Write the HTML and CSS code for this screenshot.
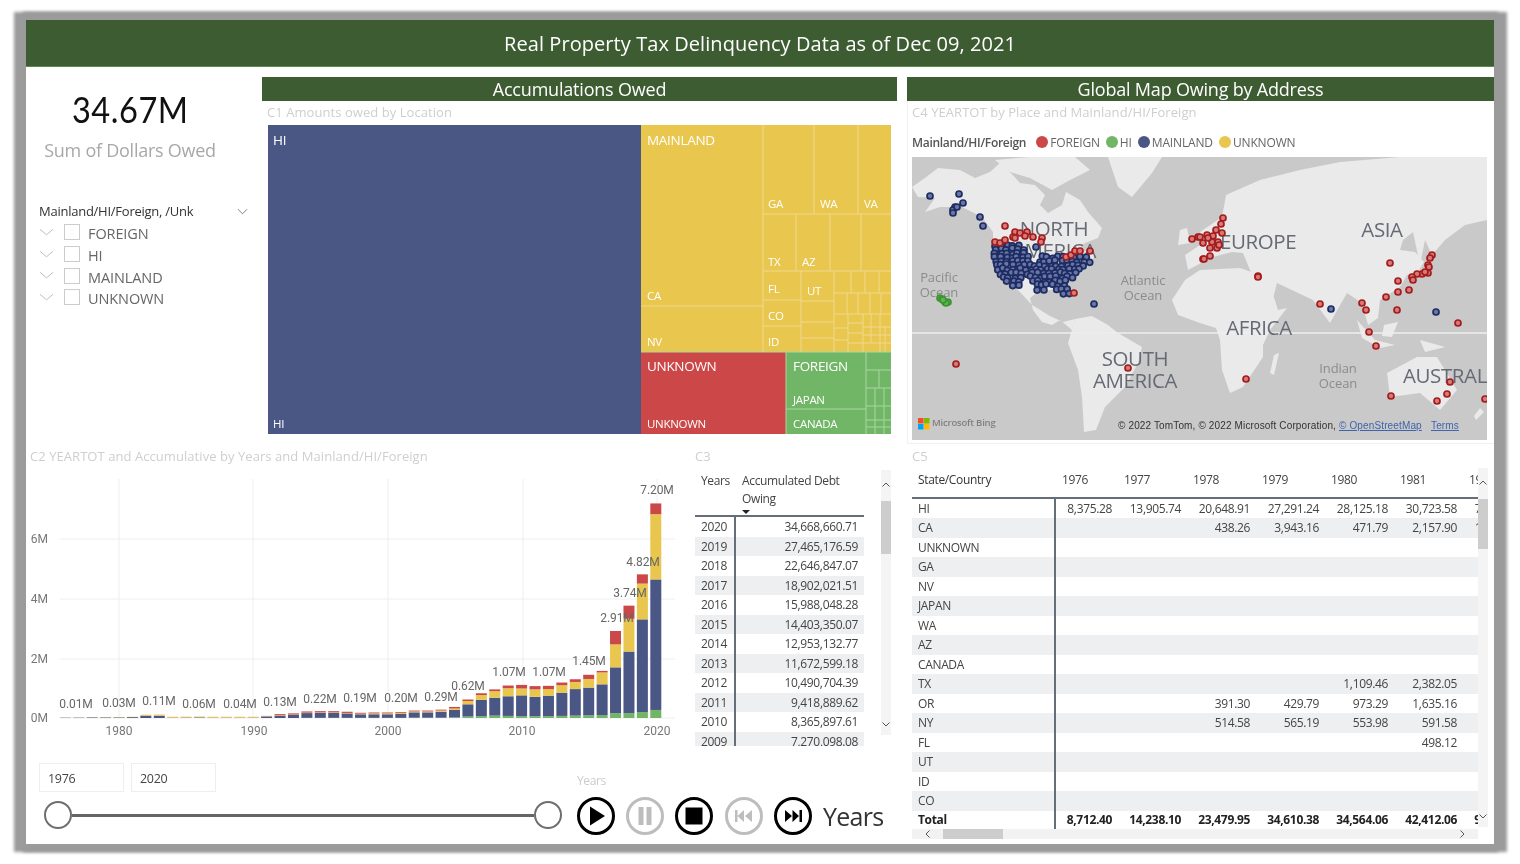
FILE: index.html
```html
<!DOCTYPE html>
<html lang="en">
<head>
<meta charset="utf-8">
<title>Real Property Tax Delinquency Data</title>
<link rel="stylesheet" href="styles.css">
</head>
<body>
<div class="frame">
  <header class="banner">Real Property Tax Delinquency Data as of Dec 09, 2021</header>
  <main class="board">
    <div class="left">
      <div class="top-row">
        <aside class="side">
          <div class="kpi"><span class="kpi-num">34.67M</span></div>
          <div class="kpi-label">Sum of Dollars Owed</div>
          <div class="slicer">
            <div class="slicer-head"><span>Mainland/HI/Foreign, /Unk</span><svg class="chev-s" viewBox="0 0 12 7"><polyline points="1,1 6,6 11,1"/></svg></div>
            <div class="slicer-item"><svg class="chev" viewBox="0 0 16 8"><polyline points="1,1 8,7 15,1"/></svg><span class="box"></span><span>FOREIGN</span></div>
            <div class="slicer-item"><svg class="chev" viewBox="0 0 16 8"><polyline points="1,1 8,7 15,1"/></svg><span class="box"></span><span>HI</span></div>
            <div class="slicer-item"><svg class="chev" viewBox="0 0 16 8"><polyline points="1,1 8,7 15,1"/></svg><span class="box"></span><span>MAINLAND</span></div>
            <div class="slicer-item"><svg class="chev" viewBox="0 0 16 8"><polyline points="1,1 8,7 15,1"/></svg><span class="box"></span><span>UNKNOWN</span></div>
          </div>
        </aside>
        <section class="tree-panel">
          <h2 class="section-head">Accumulations Owed</h2>
          <div class="cap cap-tree">C1 Amounts owed by Location</div>
          <svg class="treemap" viewBox="268 125 623 309">
            <rect x="268" y="125" width="373" height="309" fill="#4a5785"/>
            <rect x="641" y="125" width="250" height="227" fill="#e9c64e"/>
            <rect x="641" y="352" width="145" height="82" fill="#cc4747"/>
            <rect x="786" y="352" width="105" height="82" fill="#71b666"/>
            <path class="tl" d="M641 306H763M763 125V352M814 125V214M858 125V214M763 214H891M796 214V271M830 214V271M861 214V271M763 271H891M801 271V352M834 271V352M763 300H801M763 326H801M801 301H834M801 322H834M801 338H834M834 293H891M851 271V293M865 271V293M879 271V293M847 293V314M858 293V314M870 293V314M881 293V314M834 314H891M848 314V352M834 328H848M834 340H848M848 323H863M848 333H863M848 343H891M863 314V352M871 314V343M880 314V352M885 326V352M863 327H891M863 335H891"/>
            <path class="tl tg" d="M641 352H891M786 352V434M786 409H866M866 352V434M866 370H891M866 388H891M879 370V388M866 406H891M875 388V434M884 388V434M866 420H891M866 427H891"/>
            <text class="t-big" x="273" y="145">HI</text>
            <text class="t-sm" x="273" y="428">HI</text>
            <text class="t-big" x="647" y="145">MAINLAND</text>
            <text class="t-sm" x="647" y="300">CA</text>
            <text class="t-sm" x="647" y="346">NV</text>
            <text class="t-sm" x="768" y="208">GA</text>
            <text class="t-sm" x="820" y="208">WA</text>
            <text class="t-sm" x="864" y="208">VA</text>
            <text class="t-sm" x="768" y="266">TX</text>
            <text class="t-sm" x="802" y="266">AZ</text>
            <text class="t-sm" x="768" y="293">FL</text>
            <text class="t-sm" x="768" y="320">CO</text>
            <text class="t-sm" x="768" y="346">ID</text>
            <text class="t-sm" x="807" y="295">UT</text>
            <text class="t-big" x="647" y="371">UNKNOWN</text>
            <text class="t-sm" x="647" y="428">UNKNOWN</text>
            <text class="t-big" x="793" y="371">FOREIGN</text>
            <text class="t-sm" x="793" y="404">JAPAN</text>
            <text class="t-sm" x="793" y="428">CANADA</text>
          </svg>
        </section>
      </div>
      <div class="mid-row">
        <section class="chart-panel">
          <div class="cap cap-chart">C2 YEARTOT and Accumulative by Years and Mainland/HI/Foreign</div>
          <svg class="barchart" viewBox="26 470 664 270">
            <path class="grid" d="M60 539H675M60 599H675M60 659H675M60 718H675M119 479V718M253 479V718M388 479V718M523 479V718M657 479V718"/>
            <g id="bars"></g>
            <g class="axis">
              <text x="48" y="543" text-anchor="end">6M</text>
              <text x="48" y="603" text-anchor="end">4M</text>
              <text x="48" y="663" text-anchor="end">2M</text>
              <text x="48" y="722" text-anchor="end">0M</text>
              <text x="119" y="735" text-anchor="middle">1980</text>
              <text x="254" y="735" text-anchor="middle">1990</text>
              <text x="388" y="735" text-anchor="middle">2000</text>
              <text x="522" y="735" text-anchor="middle">2010</text>
              <text x="657" y="735" text-anchor="middle">2020</text>
            </g>
            <g class="vals" text-anchor="middle">
              <text x="76" y="708">0.01M</text>
              <text x="119" y="707">0.03M</text>
              <text x="159" y="705">0.11M</text>
              <text x="199" y="708">0.06M</text>
              <text x="240" y="708">0.04M</text>
              <text x="280" y="706">0.13M</text>
              <text x="320" y="703">0.22M</text>
              <text x="360" y="702">0.19M</text>
              <text x="401" y="702">0.20M</text>
              <text x="441" y="701">0.29M</text>
              <text x="468" y="690">0.62M</text>
              <text x="509" y="676">1.07M</text>
              <text x="549" y="676">1.07M</text>
              <text x="589" y="665">1.45M</text>
              <text x="617" y="622">2.91M</text>
              <text x="630" y="597">3.74M</text>
              <text x="643" y="566">4.82M</text>
              <text x="657" y="494">7.20M</text>
            </g>
          </svg>
        </section>
        <section class="c3">
          <div class="cap cap-c3">C3</div>
          <div class="c3-body">
            <div class="c3-table">
              <div class="c3-head"><span class="c3-y">Years</span><span class="c3-a">Accumulated Debt Owing<i class="sort"></i></span></div>
              <div class="c3-row"><span>2020</span><span>34,668,660.71</span></div>
              <div class="c3-row"><span>2019</span><span>27,465,176.59</span></div>
              <div class="c3-row"><span>2018</span><span>22,646,847.07</span></div>
              <div class="c3-row"><span>2017</span><span>18,902,021.51</span></div>
              <div class="c3-row"><span>2016</span><span>15,988,048.28</span></div>
              <div class="c3-row"><span>2015</span><span>14,403,350.07</span></div>
              <div class="c3-row"><span>2014</span><span>12,953,132.77</span></div>
              <div class="c3-row"><span>2013</span><span>11,672,599.18</span></div>
              <div class="c3-row"><span>2012</span><span>10,490,704.39</span></div>
              <div class="c3-row"><span>2011</span><span>9,418,889.62</span></div>
              <div class="c3-row"><span>2010</span><span>8,365,897.61</span></div>
              <div class="c3-row"><span>2009</span><span>7,270,098.08</span></div>
            </div>
            <div class="vbar vbar-c3">
              <svg class="arrow" viewBox="0 0 8 5"><polyline points="0.5,4.5 4,1 7.5,4.5"/></svg>
              <span class="thumb thumb-c3"></span>
              <svg class="arrow arrow-end" viewBox="0 0 8 5"><polyline points="0.5,0.5 4,4 7.5,0.5"/></svg>
            </div>
          </div>
        </section>
      </div>
      <div class="slider-row">
        <div class="range">
          <div class="dates"><span class="date">1976</span><span class="date">2020</span></div>
          <div class="track"><span class="knob"></span><span class="line"></span><span class="knob"></span></div>
        </div>
        <div class="player">
          <div class="player-cap">Years</div>
          <div class="player-main">
            <svg class="btn" viewBox="0 0 40 40"><circle cx="20" cy="20" r="17.5"/><path class="solid" d="M14 10.5L29 20L14 29.5Z"/></svg>
            <svg class="btn off" viewBox="0 0 40 40"><circle cx="20" cy="20" r="17.5"/><path class="solid" d="M13.5 11h5v18h-5zM21.5 11h5v18h-5z"/></svg>
            <svg class="btn" viewBox="0 0 40 40"><circle cx="20" cy="20" r="17.5"/><path class="solid" d="M11.5 11.500h17v17h-17z"/></svg>
            <svg class="btn off" viewBox="0 0 40 40"><circle cx="20" cy="20" r="17.500"/><path class="solid" d="M11 14h2.500v12H11zM20 14v12l-6.500-6zM28 14v12l-7-6z"/></svg>
            <svg class="btn" viewBox="0 0 40 40"><circle cx="20" cy="20" r="17.500"/><path class="solid" d="M12 14l7 6-7 6zM19.500 14l6.500 6-6.500 6zM26.500 14H29v12h-2.500z"/></svg>
            <span class="player-label">Years</span>
          </div>
        </div>
      </div>
    </div>
    <div class="right">
      <section class="map-panel">
        <h2 class="section-head">Global Map Owing by Address</h2>
        <div class="cap cap-map">C4 YEARTOT by Place and Mainland/HI/Foreign</div>
        <div class="legend">
          <b>Mainland/HI/Foreign</b>
          <span class="lg"><i class="dot d-red"></i>FOREIGN</span>
          <span class="lg"><i class="dot d-green"></i>HI</span>
          <span class="lg"><i class="dot d-navy"></i>MAINLAND</span>
          <span class="lg"><i class="dot d-yellow"></i>UNKNOWN</span>
        </div>
        <svg class="map" viewBox="912 157 575 283">
          <rect x="912" y="157" width="575" height="283" fill="#c9c9c9"/>
          <g class="land">
            <path d="M912 187L925 178 938 168 960 170 975 178 990 172 1000 163 1010 172 1020 183 1035 185 1045 195 1040 205 1048 213 1062 205 1066 192 1080 200 1088 212 1102 228 1098 238 1085 243 1078 250 1095 253 1092 262 1082 270 1072 277 1066 285 1064 296 1058 291 1050 290 1038 292 1030 298 1033 310 1042 322 1052 325 1060 320 1072 330 1075 319 1063 322 1050 316 1032 305 1018 290 1004 275 993 257 993 232 982 217 962 207 940 207 925 212 935 198 918 197Z"/>
            <path d="M995 160L1030 157 1075 157 1090 170 1070 180 1052 190 1030 178 1010 172Z"/>
            <path d="M1075 319L1092 316 1108 325 1118 333 1142 347 1138 363 1125 387 1105 407 1096 430 1084 432 1082 397 1078 370 1068 343Z"/>
            <path d="M1108 157H1162L1152 173 1132 197 1118 187Z"/>
            <path d="M1172 300L1185 280 1200 270 1240 268 1260 275 1270 285 1278 310 1287 308 1270 330 1263 345 1263 357 1243 387 1230 393 1222 370 1220 340 1216 328 1200 323 1178 315Z"/>
            <path d="M1188 270L1185 255 1200 245 1200 232 1222 217 1226 195 1260 180 1300 170 1340 162 1400 157 1487 157 1487 220 1465 225 1445 240 1432 255 1425 240 1420 265 1413 232 1403 240 1400 250 1415 252 1424 262 1418 272 1407 275 1400 287 1380 300 1378 318 1368 325 1362 303 1347 293 1330 323 1313 300 1277 283 1270 310 1257 287 1243 253 1232 252 1213 257 1203 262Z"/>
            <path d="M1180 230L1187 228 1190 243 1178 245Z"/>
            <path d="M1387 373L1417 357 1437 357 1457 390 1440 410 1420 393 1390 397Z"/>
            <path d="M1357 320L1375 340 1395 345 1380 348 1362 338ZM1384 325L1398 322 1392 337 1382 336ZM1420 340L1445 347 1425 352Z"/>
            <path d="M1274 355L1279 353 1274 375 1270 373ZM1480 408L1484 412 1476 420 1474 416Z"/>
          </g>
          <line class="equator" x1="912" y1="333" x2="1487" y2="333"/>
          <g class="m-big">
            <text x="1054" y="236" text-anchor="middle">NORTH</text>
            <text x="1054" y="258" text-anchor="middle">AMERICA</text>
            <text x="1220" y="249">EUROPE</text>
            <text x="1382" y="237" text-anchor="middle">ASIA</text>
            <text x="1259" y="335" text-anchor="middle">AFRICA</text>
            <text x="1135" y="366" text-anchor="middle">SOUTH</text>
            <text x="1135" y="388" text-anchor="middle">AMERICA</text>
            <text x="1403" y="383">AUSTRALIA</text>
          </g>
          <g class="m-small" text-anchor="middle">
            <text x="939" y="282">Pacific</text>
            <text x="939" y="297">Ocean</text>
            <text x="1143" y="285">Atlantic</text>
            <text x="1143" y="300">Ocean</text>
            <text x="1338" y="373">Indian</text>
            <text x="1338" y="388">Ocean</text>
          </g>
          <g id="pins"></g>
          <path fill="#f25022" d="M918 418h5.500v5.500H918z"/>
          <path fill="#7fba00" d="M924 418h5.500v5.500H924z"/>
          <path fill="#00a4ef" d="M918 424h5.500v5.500H918z"/>
          <path fill="#ffb900" d="M924 424h5.500v5.500H924z"/>
          <text class="m-bing" x="932" y="426">Microsoft Bing</text>
          <text class="m-copy" x="1118" y="429">© 2022 TomTom, © 2022 Microsoft Corporation, <tspan class="m-link">© OpenStreetMap</tspan></text>
          <text class="m-copy m-link" x="1431" y="429">Terms</text>
        </svg>
      </section>
      <section class="c5">
        <div class="cap cap-c5">C5</div>
        <div class="c5-body">
          <div class="matrix">
            <div class="m-head"><span>State/Country</span><span>1976</span><span>1977</span><span>1978</span><span>1979</span><span>1980</span><span>1981</span><span>1982</span></div>
            <div class="m-row"><span>HI</span><span>8,375.28</span><span>13,905.74</span><span>20,648.91</span><span>27,291.24</span><span>28,125.18</span><span>30,723.58</span><span>71,203.34</span></div>
            <div class="m-row"><span>CA</span><span></span><span></span><span>438.26</span><span>3,943.16</span><span>471.79</span><span>2,157.90</span><span>11,902.10</span></div>
            <div class="m-row"><span>UNKNOWN</span></div>
            <div class="m-row"><span>GA</span></div>
            <div class="m-row"><span>NV</span></div>
            <div class="m-row"><span>JAPAN</span></div>
            <div class="m-row"><span>WA</span></div>
            <div class="m-row"><span>AZ</span></div>
            <div class="m-row"><span>CANADA</span></div>
            <div class="m-row"><span>TX</span><span></span><span></span><span></span><span></span><span>1,109.46</span><span>2,382.05</span></div>
            <div class="m-row"><span>OR</span><span></span><span></span><span>391.30</span><span>429.79</span><span>973.29</span><span>1,635.16</span></div>
            <div class="m-row"><span>NY</span><span></span><span></span><span>514.58</span><span>565.19</span><span>553.98</span><span>591.58</span></div>
            <div class="m-row"><span>FL</span><span></span><span></span><span></span><span></span><span></span><span>498.12</span></div>
            <div class="m-row"><span>UT</span></div>
            <div class="m-row"><span>ID</span></div>
            <div class="m-row"><span>CO</span></div>
            <div class="m-row m-total"><span>Total</span><span>8,712.40</span><span>14,238.10</span><span>23,479.95</span><span>34,610.38</span><span>34,564.06</span><span>42,412.06</span><span>91,204.55</span></div>
          </div>
          <div class="vbar vbar-c5">
            <svg class="arrow" viewBox="0 0 8 5"><polyline points="0.5,4.5 4,1 7.5,4.5"/></svg>
            <span class="thumb thumb-c5"></span>
            <svg class="arrow arrow-end" viewBox="0 0 8 5"><polyline points="0.5,0.5 4,4 7.5,0.5"/></svg>
          </div>
        </div>
        <div class="hbar">
          <svg class="arrow-h" viewBox="0 0 5 8"><polyline points="4.500,0.500 1,4 4.500,7.500"/></svg>
          <span class="thumb-h"></span>
          <svg class="arrow-h arrow-h-end" viewBox="0 0 5 8"><polyline points="0.500,0.500 4,4 0.500,7.500"/></svg>
        </div>
      </section>
    </div>
  </main>
</div>
<script src="chart.js"></script>
</body>
</html>
```
FILE: styles.css
```css
* { box-sizing: border-box; }
html, body { margin: 0; height: 100%; background: #fff; overflow: hidden; }
body { padding: 20px 26px; font-family: "Open Sans", "Noto Sans", sans-serif; }
.frame {
  width: 1468px; height: 824px; background: #fff; display: flex; flex-direction: column;
  box-shadow: -4px 0 3px 8px #9b9b9b, 5px 0 3px 8px #9b9b9b; filter: blur(0.35px);
}
.banner {
  height: 47px; background: #3d5c32; border-bottom: 1px solid #5c8a50; color: #fff;
  font-size: 20px; letter-spacing: 0.07px; display: flex; align-items: center; justify-content: center; flex: none;
}
.board { display: flex; gap: 10px; padding-top: 10px; flex: 1; min-height: 0; }
.left { width: 871px; display: flex; flex-direction: column; flex: none; }
.right { width: 587px; display: flex; flex-direction: column; flex: none; }
.top-row { display: flex; height: 368px; flex: none; }
.mid-row { display: flex; height: 318px; flex: none; }
.slider-row { display: flex; flex: 1; min-height: 0; }

.section-head {
  margin: 0; height: 24px; background: #3d5c32; color: #fff; font-size: 18px; font-weight: 400;
  letter-spacing: -0.2px; line-height: 24px; text-align: center;
}
.cap { color: #cfcfcf; font-size: 13px; letter-spacing: 0.06px; line-height: 18px; white-space: nowrap; }
.cap-tree { margin: 2px 0 4px 5px; }
.cap-map { margin: 2px 0 1px 5px; }
.cap-chart { padding: 2px 0 0 4px; }
.cap-c3 { margin-top: 2px; }
.cap-c5 { margin: 2px 0 0 5px; }

.side { width: 236px; flex: none; }
.kpi { width: 208px; text-align: center; font-family: Lato, Roboto, sans-serif; font-size: 37px; color: #111; line-height: 44px; margin-top: 10px; letter-spacing: 0.6px; }
.kpi-num { display: inline-block; transform: scaleX(0.88); }
.kpi-label { width: 208px; text-align: center; color: #a8a8a8; font-size: 18px; letter-spacing: -0.25px; line-height: 24px; margin-top: 7px; }
.slicer { margin: 38px 0 0 13px; width: 211px; }
.slicer-head { display: flex; justify-content: space-between; align-items: center; font-size: 13px; letter-spacing: -0.25px; color: #333; height: 22px; }
.chev-s { width: 11px; height: 7px; fill: none; stroke: #777; stroke-width: 1; margin-right: 2px; }
.slicer-item { display: flex; align-items: center; height: 21.7px; color: #666; font-size: 14.5px; letter-spacing: -0.1px; }
.slicer-head + .slicer-item { margin-top: 1px; }
.chev { width: 15px; height: 8px; fill: none; stroke: #bbb; stroke-width: 1; margin-right: 10px; margin-top: -4px; }
.box { width: 16px; height: 16px; border: 1px solid #ccc; margin-right: 8px; margin-top: -3px; }

.tree-panel { width: 635px; flex: none; }
.treemap { display: block; width: 623px; height: 309px; margin-left: 6px; }
.tl { fill: none; stroke: #f0d98d; stroke-width: 1; }
.tg { stroke: #a9d7a0; }
.treemap text { fill: #fff; font-family: "Open Sans", sans-serif; letter-spacing: -0.3px; }
.t-big { font-size: 13.500px; }
.t-sm { font-size: 11.500px; }

.chart-panel { width: 664px; flex: none; }
.barchart { display: block; width: 664px; height: 270px; margin-top: 5px; overflow: visible; }
.grid { fill: none; stroke: #eeeeee; stroke-width: 1; }
.axis text { fill: #777; font-family: Roboto, sans-serif; font-size: 12px; }
.vals text { fill: #666; font-family: Roboto, sans-serif; font-size: 12px; letter-spacing: -0.1px; }

.c3 { width: 196px; margin-left: 5px; flex: none; }
.c3-body { display: flex; }
.c3-table { width: 169px; height: 281px; overflow: hidden; font-size: 12px; letter-spacing: -0.35px; color: #444; flex: none; }
.c3-head { display: flex; height: 52px; border-bottom: 2px solid #666e7a; padding-top: 7px; line-height: 18px; }
.c3-y { width: 47px; padding-left: 6px; flex: none; }
.c3-a { width: 122px; position: relative; }
.sort { position: absolute; left: 0; bottom: 1px; border: 4px solid transparent; border-top: 4px solid #222; border-bottom: 0; }
.c3-row { display: flex; height: 19.5px; line-height: 19.5px; }
.c3-row:nth-child(odd) { background: #eeeff1; }
.c3-row span:first-child { width: 41px; padding-left: 6px; flex: none; border-right: 2px solid #666e7a; }
.c3-row span:last-child { flex: 1; text-align: right; padding-right: 6px; }
.vbar { background: #f4f4f4; display: flex; flex-direction: column; align-items: center; flex: none; }
.vbar-c3 { width: 10px; height: 265px; margin-left: 17px; margin-top: 5px; }
.arrow { width: 8px; height: 5px; fill: none; stroke: #555; stroke-width: 1; margin-top: 12px; flex: none; }
.arrow-end { margin-top: auto; margin-bottom: 8px; }
.thumb { background: #cdcdcd; width: 10px; flex: none; }
.thumb-c3 { height: 53px; margin-top: 14px; }
.thumb-c5 { height: 50px; margin-top: 14px; }

.range { width: 550px; flex: none; padding-left: 13px; }
.dates { display: flex; gap: 7px; }
.date { width: 85px; height: 29px; border: 1px solid #eee; font-size: 12.500px; letter-spacing: -0.3px; color: #444; padding-left: 8px; line-height: 29px; }
.track { display: flex; align-items: center; margin-top: 9px; margin-left: 5px; width: 518px; }
.knob { width: 28px; height: 28px; border-radius: 50%; border: 2px solid #6e6e6e; background: #fff; flex: none; }
.line { flex: 1; height: 3px; background: #666; }
.player { flex: 1; }
.player-cap { color: #ccc; font-size: 12px; letter-spacing: -0.4px; line-height: 16px; margin: 10px 0 0 1px; }
.player-main { display: flex; align-items: center; margin-top: 7px; gap: 9.2px; }
.btn { width: 40px; height: 40px; flex: none; }
.btn circle { fill: #fff; stroke: #000; stroke-width: 3; }
.btn .solid { fill: #000; }
.btn.off circle { stroke: #bdbdbd; }
.btn.off .solid { fill: #bdbdbd; }
.player-label { font-size: 25px; color: #333; letter-spacing: -0.7px; margin-left: 1px; }

.map-panel { height: 367px; box-shadow: inset 1px 0 0 #f1f1f1, inset 0 -1px 0 #f1f1f1; flex: none; }
.legend { display: flex; align-items: center; height: 20px; margin: 11px 0 5px 5px; font-size: 12px; letter-spacing: -0.15px; color: #666; white-space: nowrap; }
.legend b { font-weight: 600; color: #555; margin-right: 10px; letter-spacing: -0.3px; }
.lg { display: flex; align-items: center; margin-right: 6px; }
.dot { width: 12px; height: 12px; border-radius: 50%; margin-right: 2px; }
.d-red { background: #cc4747; }
.d-green { background: #71b666; }
.d-navy { background: #4a5785; }
.d-yellow { background: #e9c64e; }
.map { display: block; width: 575px; height: 283px; margin-left: 5px; }
.land path { fill: #eaeaea; }
.equator { stroke: #eeeeee; stroke-width: 1.5; }
.m-big text { fill: #666a75; font-family: "Open Sans", sans-serif; font-size: 20.500px; letter-spacing: -0.4px; }
.m-small text { fill: #8c8c8c; font-family: "Open Sans", sans-serif; font-size: 13px; letter-spacing: -0.1px; }
.m-bing { fill: #808080; font-family: "Open Sans", sans-serif; font-size: 9.500px; font-weight: 600; letter-spacing: -0.2px; }
.m-copy { fill: #333; font-family: "Liberation Sans", sans-serif; font-size: 10px; letter-spacing: 0.14px; }
.m-link { fill: #3f63ad; text-decoration: underline; }

.c5 { padding-top: 1px; }
.c5-body { display: flex; margin: 3px 0 0 5px; }
.matrix { width: 566px; height: 361px; overflow: hidden; font-size: 12px; letter-spacing: -0.35px; color: #444; flex: none; }
.m-head, .m-row { display: grid; grid-template-columns: 144px 62px repeat(6, 69px) 69px; width: 628px; }
.m-head { height: 30.5px; padding-top: 2px; line-height: 20px; border-bottom: 2px solid #666e7a; }
.m-head span:first-child { padding-left: 6px; color: #333; }
.m-head span + span { padding-left: 6px; }
.m-row { height: 19.5px; line-height: 19.5px; }
.m-row:nth-child(odd) { background: #eeeff1; }
.m-row span:first-child { padding-left: 6px; border-right: 2px solid #666e7a; }
.m-row span + span { text-align: right; padding-right: 6px; white-space: nowrap; }
.m-total { background: #fff !important; font-weight: 700; color: #222; height: 21px; line-height: 18px; }
.vbar-c5 { width: 10px; height: 359px; }
.hbar { height: 10px; width: 566px; margin-left: 5px; background: #f2f2f2; display: flex; align-items: center; }
.arrow-h { width: 5px; height: 8px; fill: none; stroke: #555; stroke-width: 1; margin-left: 13px; flex: none; }
.arrow-h-end { margin-left: auto; margin-right: 13px; }
.thumb-h { width: 60px; height: 10px; background: #cdcdcd; margin-left: 13px; flex: none; }
```
FILE: chart.js
```js
(function () {
  var NS = 'http://www.w3.org/2000/svg';
  function el(parent, name, attrs) {
    var n = document.createElementNS(NS, name);
    for (var k in attrs) n.setAttribute(k, attrs[k]);
    parent.appendChild(n);
    return n;
  }

  // year: [green, navy, yellow, red] in millions
  var data = {
    1976: [0, .01, .005, 0], 1977: [0, .012, .005, 0], 1978: [0, .02, .005, 0], 1979: [0, .02, .01, 0],
    1980: [0, .02, .01, 0], 1981: [0, .03, .01, 0], 1982: [0, .07, .03, .005], 1983: [0, .07, .035, .005],
    1984: [0, .012, .03, 0], 1985: [0, .015, .03, 0], 1986: [0, .02, .03, 0], 1987: [0, .012, .03, 0],
    1988: [0, .012, .03, 0], 1989: [0, .012, .03, 0], 1990: [0, .012, .03, 0], 1991: [0, .05, .01, .01],
    1992: [0, .08, .015, .035], 1993: [0, .1, .015, .04], 1994: [.005, .16, .015, .04], 1995: [.005, .17, .015, .04],
    1996: [.005, .17, .015, .04], 1997: [.005, .15, .015, .04], 1998: [.005, .12, .02, .03], 1999: [.005, .12, .03, .03],
    2000: [.005, .12, .03, .03], 2001: [.005, .13, .03, .03], 2002: [.01, .18, .03, .03], 2003: [.01, .18, .03, .03],
    2004: [.01, .2, .04, .03], 2005: [.02, .25, .05, .05], 2006: [.05, .41, .11, .05], 2007: [.06, .55, .16, .06],
    2008: [.08, .6, .22, .06], 2009: [.07, .66, .27, .09], 2010: [.06, .7, .23, .12], 2011: [.06, .65, .25, .11],
    2012: [.06, .69, .22, .11], 2013: [.07, .78, .25, .09], 2014: [.08, .89, .24, .09], 2015: [.09, .93, .29, .14],
    2016: [.1, 1.03, .4, .05], 2017: [.16, 1.54, .77, .45], 2018: [.16, 2.07, 1.1, .44], 2019: [.2, 3.11, 1.2, .31],
    2020: [.27, 4.38, 2.19, .36]
  };
  var colors = ['#71b666', '#4a5785', '#e9c64e', '#cc4747'];
  var bars = document.getElementById('bars');
  var perM = 29.8, base = 718, w = 11;
  Object.keys(data).forEach(function (y) {
    var x = 119 + (y - 1980) * 13.42 - w / 2, top = base;
    data[y].forEach(function (v, i) {
      if (!v) return;
      var h = v * perM;
      top -= h;
      el(bars, 'rect', { x: x.toFixed(2), y: top.toFixed(2), width: w, height: h.toFixed(2), fill: colors[i] });
    });
  });

  var pins = document.getElementById('pins');
  var palette = {
    red: ['#d67a7a', '#a51c1c'],
    navy: ['#6a77a5', '#1d2c63'],
    green: ['#63b457', '#3c9533']
  };
  function pin(list, kind) {
    list.forEach(function (p) {
      el(pins, 'circle', { cx: p[0], cy: p[1], r: 3, fill: palette[kind][0], stroke: palette[kind][1], 'stroke-width': 1.7 });
    });
  }

  // Continental cluster: seeded scatter inside rows of [y, xStart, xEnd]
  var rows = [
    [245, 995, 1018], [249, 994, 1022], [253, 994, 1024], [257, 994, 1030], [257, 1040, 1087], [261, 994, 1032], [261, 1038, 1088],
    [265, 995, 1086], [269, 996, 1082], [273, 998, 1077], [277, 1002, 1022], [277, 1028, 1074], [281, 1006, 1020], [281, 1032, 1070],
    [285, 1012, 1018], [285, 1035, 1066], [289, 1036, 1044], [289, 1055, 1070], [293, 1062, 1070]
  ];
  var cluster = [], seed = 7;
  function rnd() { seed = (seed * 16807) % 2147483647; return seed / 2147483647; }
  rows.forEach(function (r) {
    for (var x = r[1]; x <= r[2]; x += 5.5) {
      cluster.push([+(x + rnd() * 2.5).toFixed(1), +(r[0] + rnd() * 2.5 - 1).toFixed(1)]);
    }
  });
  pin([[930,196],[959,194],[963,203],[955,207],[953,210],[953,213],[957,207],[980,217],[983,226],[1036,247],[1094,304],[1331,309],[1436,312]].concat(cluster), 'navy');
  pin([[940,298],[942,299],[945,302],[948,302],[946,303],[943,300]], 'green');
  pin([
    [956,364],[1128,368],[1074,293],[1005,226],[1015,232],[1013,237],[1020,233],[1027,232],[1025,236],[1033,237],[1042,238],[1041,242],
    [995,242],[1000,243],[1005,240],[1015,238],[1066,257],[1071,255],[1075,251],[1080,251],[1090,251],
    [1192,239],[1198,237],[1200,237],[1203,243],[1203,259],[1223,218],[1221,224],[1216,230],[1222,233],[1207,235],[1213,236],[1218,242],
    [1212,242],[1217,248],[1210,248],[1210,256],[1204,259],[1219,245],[1208,238],
    [1258,276],[1258,277],[1246,379],[1320,304],[1362,303],[1366,310],[1369,332],[1376,346],[1390,263],[1398,281],[1398,292],[1386,297],
    [1409,290],[1397,310],[1458,323],[1391,396],[1450,382],[1447,394],[1437,401],[1485,399],
    [1432,255],[1430,258],[1428,265],[1429,267],[1428,273],[1422,274],[1417,274],[1412,277],[1413,280],[1425,272]
  ], 'red');
})();
```
